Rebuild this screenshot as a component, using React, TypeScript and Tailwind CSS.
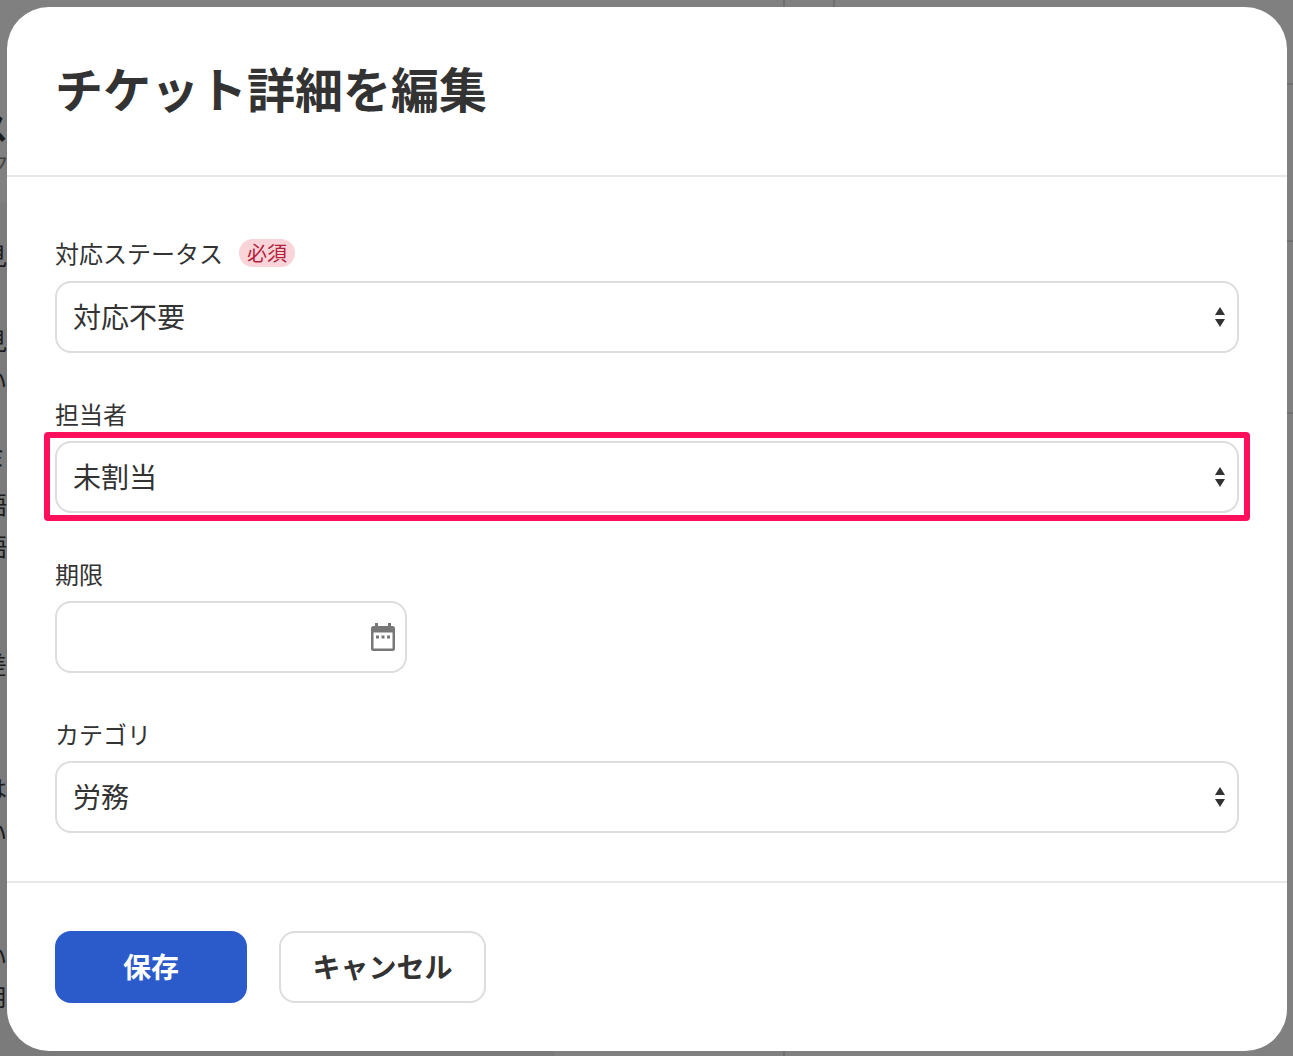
import { useState } from 'react';

const selectClass =
  'h-[72px] w-full appearance-none rounded-2xl border-2 border-[#dddddd] bg-white pb-[3px] pl-4 pr-12 text-[28px] leading-[40px] text-[#333333] outline-none';

const SelectArrows = () => (
  <svg
    className="pointer-events-none absolute right-[14px] top-[26px] h-5 w-[10px] text-[#333333]"
    viewBox="0 0 10 20"
    fill="currentColor"
  >
    <path d="M5 0 L10 8 L0 8 Z" />
    <path d="M0 12 L10 12 L5 20 Z" />
  </svg>
);

const CalendarIcon = () => (
  <svg
    className="pointer-events-none absolute right-3 top-[22px] h-7 w-6 text-[#777777]"
    viewBox="0 0 24 28"
    fill="currentColor"
  >
    <path d="M4 0h3v3h10V0h3v3h1.5A2.5 2.5 0 0 1 24 5.5v20a2.5 2.5 0 0 1-2.5 2.5h-19A2.5 2.5 0 0 1 0 25.5v-20A2.5 2.5 0 0 1 2.5 3H4z" />
    <rect x="2.5" y="9.5" width="19" height="16" fill="#ffffff" />
    <rect x="5" y="12.5" width="3" height="3" />
    <rect x="10.5" y="12.5" width="3" height="3" />
    <rect x="16" y="12.5" width="3" height="3" />
  </svg>
);

// page behind the dialog, only its edges show
const Backdrop = () => (
  <div className="flex h-[1056px] flex-col overflow-hidden bg-[#808080] text-[#1c1c1c]">
    <div className="relative h-[203px] shrink-0">
      <div className="absolute left-[783px] top-0 h-2 w-[2px] bg-[#707070]" />
      <div className="absolute left-[833px] top-0 h-2 w-[2px] bg-[#707070]" />
      <div className="absolute right-0 top-[83px] h-[2px] w-2 bg-[#707070]" />
      <p className="-ml-[24px] pt-[106px] text-[32px] font-bold leading-[40px]">ス</p>
      <p className="-ml-[13px] text-[22px] leading-[32px] text-[#444444]">ク</p>
    </div>
    <div className="relative flex-1">
      <div className="absolute right-0 top-[37px] h-[2px] w-2 bg-[#707070]" />
      <div className="absolute right-0 top-[209px] h-[2px] w-2 bg-[#707070]" />
      <div className="absolute bottom-0 left-[783px] h-2 w-[2px] bg-[#707070]" />
      <div className="h-full w-[554px] bg-[#7b7b7b] pt-[36px] text-[24px] leading-[32px]">
        <p className="-ml-[17px]">見</p>
        <p className="-ml-[17px] mt-[53px]">見</p>
        <p className="-ml-[17px] mt-[8px]">い</p>
        <p className="-ml-[17px] mt-[44px]">ミ</p>
        <p className="-ml-[17px] mt-[16px]">語</p>
        <p className="-ml-[17px] mt-[10px]">語</p>
        <p className="-ml-[17px] mt-[42px]">・</p>
        <p className="-ml-[17px] mt-[12px]">差</p>
        <p className="-ml-[17px] mt-[92px]">は</p>
        <p className="-ml-[17px] mt-[12px]">い</p>
        <p className="-ml-[17px] mt-[92px]">い</p>
        <p className="-ml-[17px] mt-[8px]">用</p>
      </div>
    </div>
  </div>
);

export default function App() {
  const [status, setStatus] = useState('対応不要');
  const [owner, setOwner] = useState('未割当');
  const [category, setCategory] = useState('労務');

  return (
    <div
      className="relative h-[1056px] overflow-hidden"
      style={{ fontFamily: '"Noto Sans CJK JP", "Noto Sans", sans-serif' }}
    >
      <Backdrop />

      <div className="absolute left-[7px] top-[7px] flex h-[1044px] w-[1280px] flex-col rounded-[42px] bg-white text-[#333333]">
        <div className="flex h-[170px] shrink-0 items-center border-b-2 border-[#e8e8e8] pb-2 pl-12">
          <h1 className="text-[48px] font-bold leading-[64px]">チケット詳細を編集</h1>
        </div>

        <div className="flex flex-1 flex-col gap-[44px] px-12 pt-[60px]">
          <div>
            <div className="mb-3 flex h-8 items-center gap-4">
              <label className="text-2xl leading-[34px]">対応ステータス</label>
              <span className="rounded-full bg-[#f9d5da] px-2 text-[20px] leading-7 text-[#b3213b]">必須</span>
            </div>
            <div className="relative">
              <select className={selectClass} value={status} onChange={(e) => setStatus(e.target.value)}>
                <option>対応不要</option>
                <option>対応中</option>
                <option>完了</option>
              </select>
              <SelectArrows />
            </div>
          </div>

          <div>
            <label className="mb-[10px] block text-2xl leading-[34px]">担当者</label>
            <div className="relative">
              <select className={selectClass} value={owner} onChange={(e) => setOwner(e.target.value)}>
                <option>未割当</option>
              </select>
              <SelectArrows />
              {/* annotation box drawn over the field */}
              <div className="pointer-events-none absolute -bottom-2 -left-[11px] -right-[11px] -top-[9px] rounded border-[6.5px] border-[#ff0f5c]" />
            </div>
          </div>

          <div>
            <label className="mb-[10px] block text-2xl leading-[34px]">期限</label>
            <div className="relative w-[352px]">
              <input
                type="text"
                readOnly
                className="h-[72px] w-full rounded-2xl border-2 border-[#dddddd] bg-white pl-4 text-[28px] outline-none"
              />
              <CalendarIcon />
            </div>
          </div>

          <div>
            <label className="mb-[10px] block text-2xl leading-[34px]">カテゴリ</label>
            <div className="relative">
              <select className={selectClass} value={category} onChange={(e) => setCategory(e.target.value)}>
                <option>労務</option>
                <option>経理</option>
              </select>
              <SelectArrows />
            </div>
          </div>
        </div>

        <div className="flex h-[170px] shrink-0 items-center gap-8 border-t-2 border-[#e8e8e8] px-12">
          <button className="h-[72px] w-[192px] rounded-2xl bg-[#2b5bcb] pb-[2px] text-[28px] font-bold text-white">保存</button>
          <button className="h-[72px] w-[207px] rounded-2xl border-2 border-[#dddddd] bg-white pb-[2px] text-[28px] font-bold text-[#333333]">
            キャンセル
          </button>
        </div>
      </div>
    </div>
  );
}
